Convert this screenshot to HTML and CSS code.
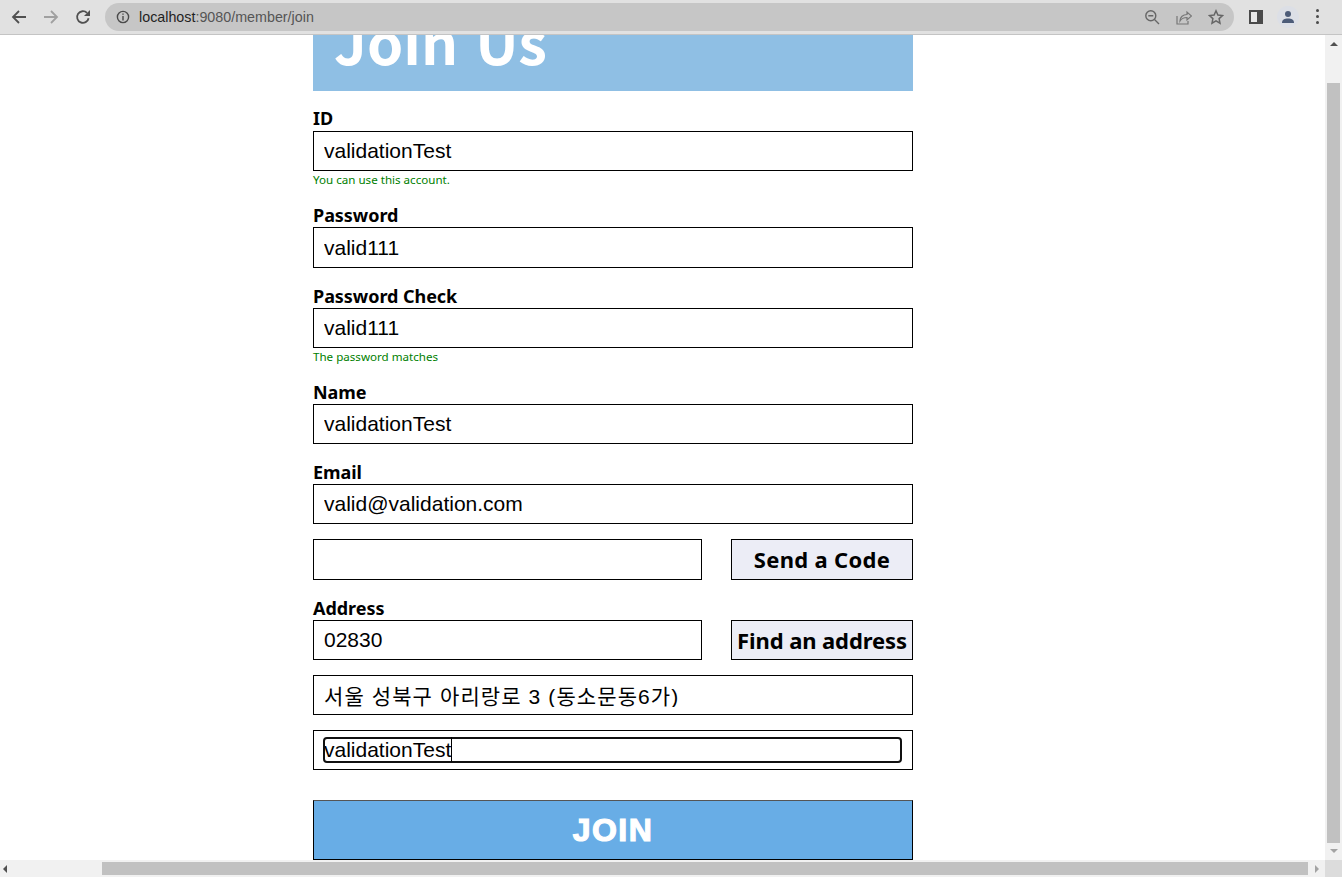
FILE: index.html
```html
<!DOCTYPE html>
<html lang="en">
<head>
<meta charset="utf-8">
<title>Join Us</title>
<link rel="stylesheet" href="styles.css">
</head>
<body>
<div class="window">
  <header class="toolbar">
    <nav class="nav-buttons">
      <svg class="tb-icon" viewBox="0 0 16 16"><path d="M15 8H2.5M8 2 2 8l6 6" fill="none" stroke="#505050" stroke-width="1.8"/></svg>
      <svg class="tb-icon" viewBox="0 0 16 16"><path d="M1 8h12.5M8 2l6 6-6 6" fill="none" stroke="#a0a0a0" stroke-width="1.8"/></svg>
      <svg class="tb-icon" viewBox="0 0 16 16"><path d="M13.6 9.2A5.8 5.8 0 1 1 12 3.9" fill="none" stroke="#505050" stroke-width="1.8"/><path d="M15 1v6H9z" fill="#505050"/></svg>
    </nav>
    <div class="omnibox">
      <svg class="info" viewBox="0 0 14 14"><circle cx="7" cy="7" r="5.6" fill="none" stroke="#4a4a4a" stroke-width="1.4"/><path d="M6.3 3.4h1.4v1.4H6.3zM6.3 6h1.4v4.6H6.3z" fill="#4a4a4a"/></svg>
      <span class="url"><span class="url-host">localhost</span>:9080/member/join</span>
      <div class="omni-actions">
        <svg class="omni-icon" viewBox="0 0 16 16"><circle cx="6.8" cy="6.8" r="5" fill="none" stroke="#666" stroke-width="1.4"/><path d="M4.3 6.8h5M10.5 10.5l4.5 4.5" stroke="#666" stroke-width="1.4" fill="none"/></svg>
        <svg class="omni-icon" viewBox="0 0 16 16"><path d="M1 7v8h11v-3" fill="none" stroke="#777" stroke-width="1.2"/><path d="M4 12c0-4 3-6.500 7-6.500V3l4.500 4-4.500 4V8.500C8 8.500 5.500 9.500 4 12z" fill="none" stroke="#777" stroke-width="1.2"/></svg>
        <svg class="omni-icon" viewBox="0 0 16 16"><path d="m8 1.800 1.900 4.200 4.600.5-3.400 3.100.9 4.600L8 11.900l-4 2.300.9-4.600L1.500 6.500l4.600-.5z" fill="none" stroke="#666" stroke-width="1.500"/></svg>
      </div>
    </div>
    <div class="tb-right">
      <svg class="panel" viewBox="0 0 14 14"><path d="M0 0h14v14H0z" fill="#4a4a4a"/><path d="M2 2h6v10H2z" fill="#e8e8e8"/></svg>
      <div class="avatar"><svg class="avatar-icon" viewBox="0 0 14 14"><circle cx="7" cy="4" r="3" fill="#4d5c78"/><path d="M1 13c0-3.500 2.500-4.500 6-4.500s6 1 6 4.500z" fill="#4d5c78"/></svg></div>
      <div class="menu-dots"><i></i><i></i><i></i></div>
    </div>
  </header>

  <main class="page">
    <form class="join-form">
      <div class="banner"><h1 class="banner-title">Join Us</h1></div>

      <label class="label label-first">ID</label>
      <div class="box"><input class="text" value="validationTest"></div>
      <p class="hint">You can use this account.</p>

      <label class="label label-after-hint">Password</label>
      <div class="box box-tall"><input class="text" value="valid111"></div>

      <label class="label label-plain">Password Check</label>
      <div class="box"><input class="text" value="valid111"></div>
      <p class="hint">The password matches</p>

      <label class="label label-after-hint">Name</label>
      <div class="box"><input class="text" value="validationTest"></div>

      <label class="label label-email">Email</label>
      <div class="box"><input class="text" value="valid@validation.com"></div>

      <div class="row row-code">
        <div class="box box-tall box-short"><input class="text" value=""></div>
        <button type="button" class="side-btn side-btn-tall">Send a Code</button>
      </div>

      <label class="label label-address">Address</label>
      <div class="row">
        <div class="box box-short"><input class="text" value="02830"></div>
        <button type="button" class="side-btn">Find an address</button>
      </div>

      <div class="box box-gap"><input class="text text-kr" value="서울 성북구 아리랑로 3 (동소문동6가)"></div>
      <div class="box box-gap">
        <div class="focus-wrap"><input class="text text-focus" value="validationTest"><span class="caret"></span></div>
      </div>

      <button type="button" class="join-btn">JOIN</button>
    </form>
  </main>

  <div class="vscroll">
    <span class="arrow arrow-up"></span>
    <div class="vthumb"></div>
    <span class="arrow arrow-down"></span>
  </div>
  <div class="hscroll">
    <span class="arrow arrow-left"></span>
    <div class="hthumb"></div>
    <span class="arrow arrow-right"></span>
  </div>
  <div class="corner"></div>
</div>
</body>
</html>
```
FILE: styles.css
```css
* { box-sizing: border-box; }
html, body { margin: 0; height: 100%; overflow: hidden; background: #fff; }

.window {
  display: grid;
  grid-template-columns: 1fr 17px;
  grid-template-rows: 35px 1fr 17px;
  width: 1342px;
  height: 877px;
}

/* Browser toolbar */
.toolbar {
  grid-column: 1 / 3;
  display: flex;
  align-items: center;
  background: #e1e1e1;
  border-bottom: 1px solid #c4c4c4;
  padding: 0 0 1px 11px;
}
.nav-buttons { display: flex; gap: 16px; width: 94px; }
.tb-icon { width: 16px; height: 16px; }
.omnibox {
  display: flex;
  align-items: center;
  width: 1129px;
  height: 28px;
  padding: 0 10px 0 11px;
  background: #c6c6c6;
  border-radius: 14px;
}
.info { width: 14px; height: 14px; }
.url {
  margin-left: 9px;
  font: 14.3px "Liberation Sans", sans-serif;
  color: #555;
}
.url-host { color: #1f1f1f; }
.omni-actions { display: flex; gap: 16px; margin-left: auto; }
.omni-icon { width: 16px; height: 16px; }
.tb-right { display: flex; align-items: center; margin-left: 15px; }
.panel { width: 14px; height: 14px; }
.avatar {
  display: flex;
  align-items: center;
  justify-content: center;
  width: 22px;
  height: 22px;
  margin-left: 14px;
  border-radius: 50%;
  background: #dcdfe6;
}
.avatar-icon { width: 14px; height: 14px; }
.menu-dots { display: flex; flex-direction: column; gap: 3px; margin-left: 17px; }
.menu-dots i { width: 3px; height: 3px; background: #4a4a4a; border-radius: 50%; }

/* Page */
.page { overflow: hidden; padding-left: 313px; background: #fff; }
.join-form { width: 600px; font-family: "Noto Sans", "Open Sans", sans-serif; color: #000; }
.banner { height: 56px; background: #8fbfe4; padding-left: 21px; overflow: hidden; }
.banner-title {
  margin: -32px 0 0;
  font: 700 58px/74px "Noto Sans CJK KR", "Noto Sans", sans-serif;
  color: #fff;
  word-spacing: 4px;
}

.label {
  display: block;
  height: 27px;
  font-size: 18px;
  line-height: 27px;
  font-weight: 700;
  letter-spacing: -0.05px;
}
.label-first { margin-top: 14px; height: 26px; }
.label-after-hint { margin-top: 13px; height: 25px; }
.label-plain { margin-top: 15px; height: 25px; }
.label-email { margin-top: 15px; height: 25px; }
.label-address { margin-top: 15px; height: 25px; }

.box {
  display: flex;
  align-items: center;
  height: 40px;
  padding: 0 10px;
  border: 1px solid #000;
  background: #fff;
}
.box-tall { height: 41px; }
.box-short { width: 389px; }
.box-gap { margin-top: 15px; }
.text {
  flex: 1;
  min-width: 0;
  width: 100%;
  height: 24px;
  padding: 0;
  border: 0;
  outline: 0;
  background: transparent;
  font: 21px "Liberation Sans", "Noto Sans CJK KR", sans-serif;
  color: #000;
}
.text-kr { letter-spacing: 1.1px; }
.focus-wrap { position: relative; display: flex; flex: 1; margin-right: 1px; }
.text-focus {
  outline: 2px solid #101010;
  outline-offset: -1px;
  border-radius: 3px;
}
.caret {
  position: absolute;
  left: 127px;
  top: -1px;
  width: 1px;
  height: 25px;
  background: #000;
}
.hint {
  height: 18px;
  margin: 0;
  font-size: 11.600px;
  line-height: 18px;
  color: #008000;
}

.row { display: flex; justify-content: space-between; align-items: flex-start; }
.row-code { margin-top: 15px; }
.side-btn {
  width: 182px;
  height: 40px;
  padding: 0 0 1px;
  border: 1px solid #000;
  background: #ecedf6;
  font: 700 22px/36px "Noto Sans", "Open Sans", sans-serif;
  letter-spacing: -0.1px;
  color: #000;
}
.side-btn-tall { height: 41px; letter-spacing: 0.3px; }
.join-btn {
  display: block;
  width: 600px;
  height: 60px;
  margin-top: 30px;
  padding: 0;
  border: 1px solid #000;
  border-top-color: #555;
  background: #68ade6;
  font: 700 32px/58px "Liberation Sans", sans-serif;
  letter-spacing: 1.5px;
  -webkit-text-stroke: 1.2px #fff;
  color: #fff;
}

/* Scrollbars */
.vscroll {
  display: flex;
  flex-direction: column;
  align-items: center;
  background: #f1f1f1;
}
.vthumb { width: 13px; height: 760px; margin-top: 37px; background: #c1c1c1; }
.hscroll {
  display: flex;
  align-items: center;
  background: #f1f1f1;
}
.hthumb { width: 1206px; height: 13px; margin-left: 95px; background: #c1c1c1; }
.corner { background: #dcdcdc; }
.arrow { display: block; width: 0; height: 0; border-style: solid; border-color: transparent; }
.arrow-up { margin-top: 7px; border-width: 0 4px 4px; border-bottom-color: #505050; }
.arrow-down { margin-top: 6px; border-width: 4px 4px 0; border-top-color: #a3a3a3; }
.arrow-left { margin-left: 3px; border-width: 4px 4px 4px 0; border-right-color: #505050; }
.arrow-right { margin-left: 7px; border-width: 4px 0 4px 4px; border-left-color: #a3a3a3; }
```
